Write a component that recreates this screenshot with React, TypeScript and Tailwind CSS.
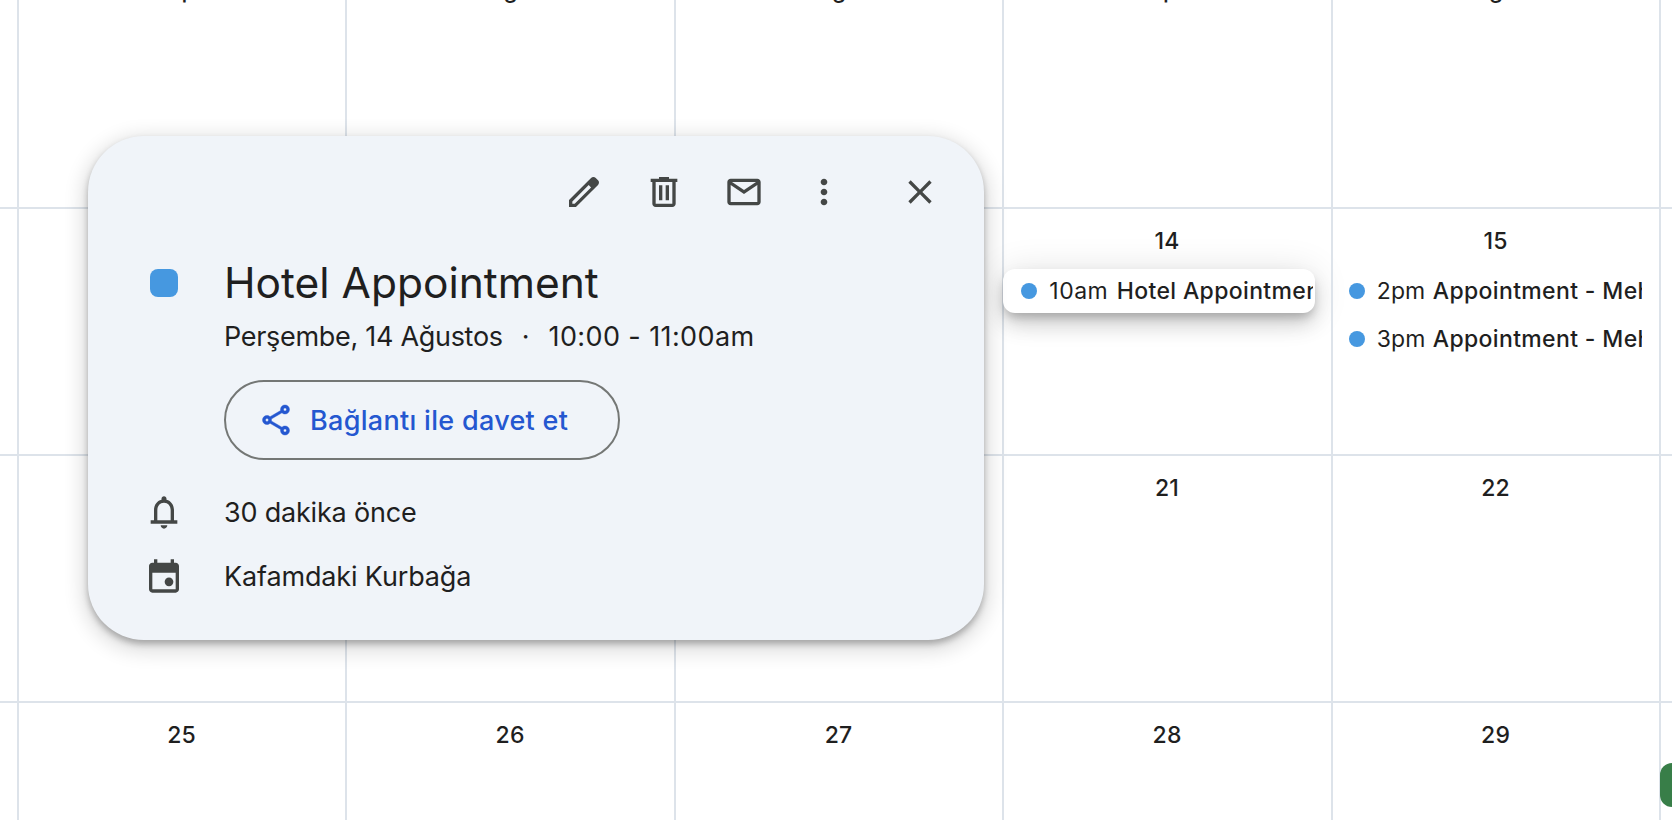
import React from "react";
import type { ReactNode } from "react";

type CalendarEvent = { time: string; title: string; selected?: boolean };
type Day = { date: string; peek?: string; peekClass?: string; events?: CalendarEvent[] };

const weeks: Day[][] = [
  [
    { date: "", peek: "p", peekClass: "pl-[13px]" },
    { date: "", peek: "ğ" },
    { date: "", peek: "ğ" },
    { date: "", peek: "p", peekClass: "pl-[5px]" },
    { date: "", peek: "ğ" },
  ],
  [
    { date: "11" },
    { date: "12" },
    { date: "13" },
    { date: "14", events: [{ time: "10am", title: "Hotel Appointment", selected: true }] },
    {
      date: "15",
      events: [
        { time: "2pm", title: "Appointment - Mehmet" },
        { time: "3pm", title: "Appointment - Mehmet" },
      ],
    },
  ],
  [{ date: "18" }, { date: "19" }, { date: "20" }, { date: "21" }, { date: "22" }],
  [{ date: "25" }, { date: "26" }, { date: "27" }, { date: "28" }, { date: "29" }],
];

function EventRow({ event }: { event: CalendarEvent }) {
  return (
    <div
      className={
        event.selected
          ? "-ml-px flex h-11 w-[312px] items-center rounded-xl bg-white pl-[18px] pr-[2px] shadow-[0_12px_20px_0_rgba(0,0,0,0.14),0_2px_36px_0_rgba(0,0,0,0.12),0_6px_10px_-2px_rgba(0,0,0,0.2)]"
          : "flex h-11 w-[311px] items-center pl-[16px] pr-[2px]"
      }
    >
      <span className="size-4 shrink-0 rounded-full bg-[#4698e0]" />
      <span className="ml-3 flex flex-1 overflow-hidden whitespace-nowrap text-[23px] leading-8">
        <span
          className={
            event.selected
              ? "w-[67.5px] shrink-0 tracking-[0.5px]"
              : "w-[56px] shrink-0 tracking-[0.1px]"
          }
        >
          {event.time}
        </span>
        <span className="font-medium tracking-[0.35px]">{event.title}</span>
      </span>
    </div>
  );
}

function DayCell({ day }: { day: Day }) {
  return (
    <div className="w-[328.5px] shrink-0 border-l-2 border-[#dde3ea]">
      {day.peek ? (
        <div className="flex h-[6px] items-end justify-center overflow-hidden text-[23px] font-medium leading-8">
          <span className={day.peekClass}>{day.peek}</span>
        </div>
      ) : (
        <div className="flex h-[60px] items-center justify-center pr-px pt-[4px] text-[23px] font-medium leading-8 tracking-[0.2px]">
          {day.date}
        </div>
      )}
      <div className="flex flex-col gap-1">
        {day.events?.map((event) => (
          <EventRow key={event.time} event={event} />
        ))}
      </div>
    </div>
  );
}

function Icon({ children, className }: { children: ReactNode; className: string }) {
  return (
    <svg viewBox="0 0 24 24" fill="currentColor" className={className}>
      {children}
    </svg>
  );
}

function EventCard() {
  return (
    <section className="absolute left-[88px] top-[136px] flex h-[504px] w-[896px] flex-col rounded-[56px] bg-[#f0f4f9] shadow-[0_4px_6px_0_rgba(0,0,0,0.26),0_6px_20px_5px_rgba(0,0,0,0.14)]">
      <div className="flex h-[112px] items-center justify-end pr-[44px] text-[#444746]">
        <Icon className="size-10">
          <path d="M20.41 4.94l-1.35-1.35c-.78-.78-2.05-.78-2.83 0L3 16.82V21h4.18L20.41 7.77c.79-.78.79-2.05 0-2.83zm-14 14.12L5 19v-1.36l9.82-9.82 1.41 1.41-9.82 9.83z" />
        </Icon>
        <Icon className="ml-10 size-10">
          <path d="M15 4V3H9v1H4v2h1v13c0 1.1.9 2 2 2h10c1.1 0 2-.9 2-2V6h1V4h-5zm2 15H7V6h10v13z" />
          <path d="M9 8h2v9H9zm4 0h2v9h-2z" />
        </Icon>
        <Icon className="ml-10 size-10">
          <path d="M20 4H4c-1.1 0-2 .9-2 2v12c0 1.1.9 2 2 2h16c1.1 0 2-.9 2-2V6c0-1.1-.9-2-2-2zm-.8 2L12 10.8 4.8 6h14.4zM4 18V7.87l8 5.33 8-5.33V18H4z" />
        </Icon>
        <Icon className="ml-10 size-10">
          <path d="M12 8c1.1 0 2-.9 2-2s-.9-2-2-2-2 .9-2 2 .9 2 2 2zm0 2c-1.1 0-2 .9-2 2s.9 2 2 2 2-.9 2-2-.9-2-2-2zm0 6c-1.1 0-2 .9-2 2s.9 2 2 2 2-.9 2-2-.9-2-2-2z" />
        </Icon>
        <Icon className="ml-14 size-10">
          <path d="M19 6.41L17.59 5 12 10.59 6.41 5 5 6.41 10.59 12 5 17.59 6.41 19 12 13.41 17.59 19 19 17.59 13.41 12z" />
        </Icon>
      </div>

      <div className="flex pl-[62px]">
        <span className="mt-[21px] size-7 shrink-0 rounded-lg bg-[#4698e0]" />
        <div className="ml-[46px] flex flex-col items-start">
          <h1 className="mt-[7px] whitespace-nowrap text-[42.5px] leading-[56px]">Hotel Appointment</h1>
          <p className="mt-[6px] flex whitespace-pre text-[27px] leading-10">
            <span className="tracking-[-0.3px]">Perşembe, 14 Ağustos</span>
            <span className="mx-[19px]">·</span>
            <span className="tracking-[0.4px]">10:00 - 11:00am</span>
          </p>
          <button className="mt-[23px] flex h-20 w-[396px] items-center rounded-full border-2 border-[#747775] pl-8 text-[#2457d0]">
            <Icon className="size-9">
              <path
                stroke="currentColor"
                strokeWidth="0.3"
                d="M18 16c-.79 0-1.5.31-2.03.81L8.86 12.65c.08-.21.14-.42.14-.65s-.06-.44-.14-.65l7.11-4.16C16.5 7.69 17.21 8 18 8c1.66 0 3-1.34 3-3s-1.34-3-3-3-3 1.34-3 3c0 .24.04.47.09.7L8.04 9.81C7.5 9.31 6.79 9 6 9c-1.66 0-3 1.34-3 3s1.34 3 3 3c.79 0 1.5-.31 2.04-.81l7.05 4.11c-.06.23-.09.46-.09.7 0 1.66 1.34 3 3 3s3-1.34 3-3-1.34-3-3-3zM18 4c.55 0 1 .45 1 1s-.45 1-1 1-1-.45-1-1 .45-1 1-1zM6 13c-.55 0-1-.45-1-1s.45-1 1-1 1 .45 1 1-.45 1-1 1zm12 7c-.55 0-1-.45-1-1s.45-1 1-1 1 .45 1 1-.45 1-1 1z"
              />
            </Icon>
            <span className="ml-4 whitespace-nowrap pt-[2px] text-[27px] font-medium leading-10 tracking-[0.3px]">
              Bağlantı ile davet et
            </span>
          </button>
        </div>
      </div>

      <div className="mt-8 flex flex-col gap-6 pl-[56px] text-[27px] leading-10">
        <div className="flex h-10 items-center">
          <Icon className="size-10 text-[#444746]">
            <path d="M18 17v-6c0-3.07-1.63-5.64-4.5-6.32V4c0-.83-.67-1.5-1.5-1.5s-1.5.67-1.5 1.5v.68C7.64 5.36 6 7.92 6 11v6H4v2h16v-2h-2zm-2 0H8v-6c0-2.48 1.51-4.5 4-4.5s4 2.02 4 4.5v6zm-4 5c1.1 0 2-.9 2-2h-4c0 1.1.9 2 2 2z" />
          </Icon>
          <span className="ml-10 pt-[2px] tracking-[-0.2px]">30 dakika önce</span>
        </div>
        <div className="flex h-10 items-center">
          <Icon className="size-10 text-[#444746]">
            <path fillRule="evenodd" d="M19 4h-1V2h-2v2H8V2H6v2H5c-1.1 0-2 .9-2 2v14c0 1.1.9 2 2 2h14c1.1 0 2-.9 2-2V6c0-1.1-.9-2-2-2zm0 16H5V10h14v10z" />
            <circle cx="15" cy="15.5" r="2.6" />
          </Icon>
          <span className="ml-10 pt-[2px] tracking-[-0.15px]">Kafamdaki Kurbağa</span>
        </div>
      </div>
    </section>
  );
}

export default function App() {
  return (
    <main className="relative h-[820px] w-[1672px] overflow-hidden bg-white font-['Inter','Noto_Sans',sans-serif] text-[#1f1f1f]">
      <div className="flex flex-col">
        {weeks.map((week, index) => (
          <div
            key={index}
            className={
              index === 0
                ? "flex h-[207px] overflow-hidden"
                : "flex h-[247px] border-t-2 border-[#dde3ea]"
            }
          >
            <div className="w-[16.8px] shrink-0" />
            {week.map((day, column) => (
              <DayCell key={column} day={day} />
            ))}
            <div className="w-[13px] shrink-0 border-l-2 border-[#dde3ea] pt-[60px]">
              {index === 3 && <div className="-ml-px h-11 w-[60px] rounded-xl bg-[#387e48]" />}
            </div>
          </div>
        ))}
      </div>
      <EventCard />
    </main>
  );
}
